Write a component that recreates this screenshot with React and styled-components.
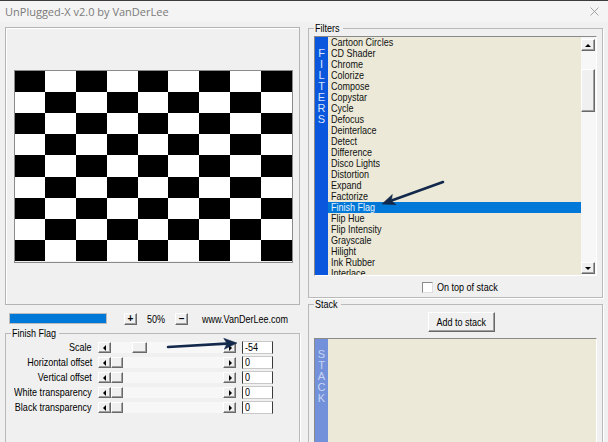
import React from "react";
import styled, { createGlobalStyle } from "styled-components";

const SANS = `"Liberation Sans", Arial, sans-serif`;

const COLORS = {
  face: "#f0f0f0",
  list: "#ece9d8",
  select: "#0078d7",
  band: "#0a57dd",
  bandOff: "#7391da",
  navy: "#13294b",
};

const FILTERS = [
  "Cartoon Circles", "CD Shader", "Chrome", "Colorize", "Compose", "Copystar",
  "Cycle", "Defocus", "Deinterlace", "Detect", "Difference", "Disco Lights",
  "Distortion", "Expand", "Factorize", "Finish Flag", "Flip Hue",
  "Flip Intensity", "Grayscale", "Hilight", "Ink Rubber", "Interlace",
];

const PARAMS = [
  { label: "Scale", value: "-54", thumb: 21, wide: true },
  { label: "Horizontal offset", value: "0", thumb: 0 },
  { label: "Vertical offset", value: "0", thumb: 0 },
  { label: "White transparency", value: "0", thumb: 0 },
  { label: "Black transparency", value: "0", thumb: 0 },
];

const GlobalStyle = createGlobalStyle`
  html, body { margin: 0; padding: 0; background: ${COLORS.face}; }
  body { font-family: ${SANS}; font-size: 11px; color: #000; }
`;

// the dialog uses a condensed bitmap font, so plain Arial is squeezed a bit
const Txt = styled.span`
  display: inline-block;
  white-space: nowrap;
  transform: scaleX(0.82);
  transform-origin: ${(p) => p.$origin || "left"} center;
`;

const Window = styled.div`
  position: relative;
  width: 608px;
  height: 442px;
  overflow: hidden;
  box-sizing: border-box;
  border-top: 1px solid #3c3c3c;
  background: ${COLORS.face};
`;

const TitleBar = styled.div`
  height: 21px;
  display: flex;
  align-items: center;
  justify-content: space-between;
  padding: 0 9px 0 5px;
  background: #f4f4f4;
  font-family: "Open Sans", "Noto Sans", sans-serif;
  font-size: 11px;
  color: #7a7a7a;
`;

const Body = styled.div`
  display: flex;
  gap: 8px;
  padding: 0 5px;
`;

const Column = styled.div`
  width: 295px;
  display: flex;
  flex-direction: column;
`;

const Preview = styled.div`
  margin-top: 5px;
  height: 278px;
  box-sizing: border-box;
  border: 1px solid #b4b4b4;
  box-shadow: inset 1px 1px #fff;
  display: flex;
  align-items: center;
  justify-content: center;
  padding-left: 1px;
`;

const Checker = styled.div`
  width: 279px;
  height: 193px;
  box-sizing: border-box;
  border: 1px solid #8a8a8a;
  display: grid;
  grid-template-columns: repeat(9, 1fr);
  grid-template-rows: repeat(9, 1fr);
`;

const Cell = styled.div`
  background: ${(p) => (p.$dark ? "#000" : "#fff")};
`;

const ZoomBar = styled.div`
  margin-top: 7px;
  height: 13px;
  display: flex;
  align-items: center;
  padding-left: 4px;
  & > * {
    flex: none;
  }
`;

const Progress = styled.div`
  width: 98px;
  height: 11px;
  box-sizing: border-box;
  border: 1px solid #bcbcbc;
  background: ${COLORS.select};
`;

const raised = `
  box-sizing: border-box;
  background: ${COLORS.face};
  border: 1px solid;
  border-color: #fff #696969 #696969 #fff;
  box-shadow: inset -1px -1px #a0a0a0;
`;

const SmallButton = styled.div`
  ${raised}
  width: 13px;
  height: 12px;
  margin-left: ${(p) => p.$ml || 0}px;
  display: flex;
  align-items: center;
  justify-content: center;
  font-size: 10px;
  font-weight: bold;
  line-height: 1;
`;

const Percent = styled.span`
  width: 38px;
  text-align: center;
`;

const Site = styled.span`
  width: 87px;
  margin-left: 14px;
  overflow: visible;
`;

const Group = styled.fieldset`
  margin: ${(p) => p.$mt || 0}px 0 0;
  padding: 0 5px 3px;
  min-width: 0;
  height: ${(p) => p.$h}px;
  box-sizing: border-box;
  border: 1px solid #b9b9b9;
  box-shadow: 1px 1px #fff;
`;

const Legend = styled.legend`
  width: ${(p) => p.$w}px;
  padding: 0 1px;
  line-height: 13px;
  font-size: 11px;
  overflow: visible;
`;

const ParamGrid = styled.div`
  margin-top: 1px;
  display: grid;
  grid-template-columns: 80px 138px 31px;
  column-gap: 6px;
  row-gap: 2px;
  padding-left: 1px;
`;

const ParamLabel = styled.div`
  height: 13px;
  line-height: 13px;
  display: flex;
  justify-content: flex-end;
`;

const HScroll = styled.div`
  display: flex;
  align-items: center;
  height: 13px;
`;

const ArrowButton = styled.div`
  ${raised}
  flex: none;
  width: ${(p) => p.$w}px;
  height: ${(p) => p.$h}px;
  display: flex;
  align-items: center;
  justify-content: center;
  &::after {
    content: "";
    width: 0;
    height: 0;
    border: 3px solid transparent;
    ${(p) =>
      ({
        left: "border-right-color: #000; border-left-width: 0; margin-left: -1px;",
        right: "border-left-color: #000; border-right-width: 0; margin-left: 1px;",
        up: "border-bottom-color: #000; border-top-width: 0;",
        down: "border-top-color: #000; border-bottom-width: 0;",
      })[p.$dir]}
  }
`;

const HTrack = styled.div`
  flex: 1;
  height: 11px;
  display: flex;
  background: #f7f7f7;
`;

const HThumb = styled.div`
  ${raised}
  width: ${(p) => (p.$wide ? 15 : 12)}px;
  height: 11px;
  margin-left: ${(p) => p.$pos}px;
`;

const Edit = styled.div`
  height: 13px;
  box-sizing: border-box;
  background: #fff;
  border: 1px solid;
  border-color: #c8c8c8 #3a3a3a #c8c8c8 #3a3a3a;
  padding-left: 2px;
  line-height: 11px;
`;

const ListBox = styled.div`
  margin-top: ${(p) => p.$mt}px;
  height: ${(p) => p.$h}px;
  display: flex;
  box-sizing: border-box;
  border: 1px solid;
  border-color: #8a8a8a #fff #fff #8a8a8a;
  background: ${COLORS.list};
  overflow: hidden;
`;

const Band = styled.div`
  flex: none;
  width: 13px;
  padding-top: ${(p) => p.$pt}px;
  display: flex;
  flex-direction: column;
  align-items: center;
  background: ${(p) => (p.$off ? COLORS.bandOff : COLORS.band)};
  color: ${(p) => (p.$off ? "#c6d4f2" : "#d9e5ff")};
  font-size: 11px;
  line-height: 11px;
`;

const Items = styled.div`
  flex: 1;
  overflow: hidden;
`;

const Item = styled.div`
  height: 11px;
  line-height: 11px;
  padding-left: 3px;
  white-space: nowrap;
  background: ${(p) => (p.$selected ? COLORS.select : "transparent")};
  color: ${(p) => (p.$selected ? "#e8f2ff" : "#111")};
`;

const VScroll = styled.div`
  flex: none;
  width: 15px;
  padding: 2px 1px 1px 0;
  box-sizing: border-box;
  display: flex;
  flex-direction: column;
  background: #f7f7f7;
`;

const VTrack = styled.div`
  flex: 1;
  padding-top: 18px;
`;

const VThumb = styled.div`
  ${raised}
  height: 43px;
`;

const CheckRow = styled.label`
  margin-top: 4px;
  height: 14px;
  display: flex;
  align-items: center;
  justify-content: center;
  gap: 4px;
  padding-left: 22px;
`;

const CheckBox = styled.span`
  width: 11px;
  height: 11px;
  box-sizing: border-box;
  background: #fff;
  border: 1px solid;
  border-color: #8a8a8a #e0e0e0 #e0e0e0 #8a8a8a;
`;

const ButtonRow = styled.div`
  margin-top: 1px;
  display: flex;
  justify-content: center;
  padding-left: 11px;
`;

const PushButton = styled.div`
  ${raised}
  width: 67px;
  height: 20px;
  display: flex;
  align-items: center;
  justify-content: center;
`;

const Overlay = styled.svg`
  position: absolute;
  top: -1px;
  left: 0;
  pointer-events: none;
`;

function Arrow({ x1, y1, x2, y2 }) {
  const dx = x2 - x1;
  const dy = y2 - y1;
  const len = Math.hypot(dx, dy);
  const ux = dx / len;
  const uy = dy / len;
  const bx = x2 - ux * 13;
  const by = y2 - uy * 13;
  const px = -uy * 5.5;
  const py = ux * 5.5;
  return (
    <g fill={COLORS.navy} stroke={COLORS.navy}>
      <line x1={x1} y1={y1} x2={bx + ux * 2} y2={by + uy * 2} strokeWidth="2.6" strokeLinecap="round" />
      <polygon points={`${x2},${y2} ${bx + px},${by + py} ${bx + ux * 3},${by + uy * 3} ${bx - px},${by - py}`} strokeWidth="0.5" />
    </g>
  );
}

function VerticalWord({ word, off, pt }) {
  return (
    <Band $off={off} $pt={pt}>
      {word.split("").map((c, i) => (
        <span key={i}>{c}</span>
      ))}
    </Band>
  );
}

export default function App() {
  return (
    <>
      <GlobalStyle />
      <Window>
        <TitleBar>
          <span>UnPlugged-X v2.0 by VanDerLee</span>
          <svg width="9" height="9" viewBox="0 0 9 9">
            <path d="M0.5 0.5 L8.5 8.5 M8.5 0.5 L0.5 8.5" stroke="#9a9a9a" strokeWidth="0.9" />
          </svg>
        </TitleBar>
        <Body>
          <Column>
            <Preview>
              <Checker>
                {Array.from({ length: 81 }, (_, i) => (
                  <Cell key={i} $dark={(Math.floor(i / 9) + (i % 9)) % 2 === 0} />
                ))}
              </Checker>
            </Preview>
            <ZoomBar>
              <Progress />
              <SmallButton $ml={17}>+</SmallButton>
              <Percent>
                <Txt $origin="center">50%</Txt>
              </Percent>
              <SmallButton>–</SmallButton>
              <Site>
                <Txt>www.VanDerLee.com</Txt>
              </Site>
            </ZoomBar>
            <Group $mt={2} $h={130}>
              <Legend $w={46}>
                <Txt>Finish Flag</Txt>
              </Legend>
              <ParamGrid>
                {PARAMS.map((p) => (
                  <React.Fragment key={p.label}>
                    <ParamLabel>
                      <Txt $origin="right">{p.label}</Txt>
                    </ParamLabel>
                    <HScroll>
                      <ArrowButton $dir="left" $w={13} $h={11} />
                      <HTrack>
                        <HThumb $pos={p.thumb} $wide={p.wide} />
                      </HTrack>
                      <ArrowButton $dir="right" $w={13} $h={11} />
                    </HScroll>
                    <Edit>
                      <Txt>{p.value}</Txt>
                    </Edit>
                  </React.Fragment>
                ))}
              </ParamGrid>
            </Group>
          </Column>
          <Column>
            <Group $h={276}>
              <Legend $w={27}>
                <Txt>Filters</Txt>
              </Legend>
              <ListBox $mt={1} $h={240}>
                <VerticalWord word="FILTERS" pt={11} />
                <Items>
                  {FILTERS.map((f) => (
                    <Item key={f} $selected={f === "Finish Flag"}>
                      <Txt>{f}</Txt>
                    </Item>
                  ))}
                </Items>
                <VScroll>
                  <ArrowButton $dir="up" $w={14} $h={12} />
                  <VTrack>
                    <VThumb />
                  </VTrack>
                  <ArrowButton $dir="down" $w={14} $h={12} />
                </VScroll>
              </ListBox>
              <CheckRow>
                <CheckBox />
                <Txt>On top of stack</Txt>
              </CheckRow>
            </Group>
            <Group $h={160}>
              <Legend $w={25}>
                <Txt>Stack</Txt>
              </Legend>
              <ButtonRow>
                <PushButton>
                  <Txt $origin="center">Add to stack</Txt>
                </PushButton>
              </ButtonRow>
              <ListBox $mt={6} $h={120}>
                <VerticalWord word="STACK" off pt={10} />
                <Items />
              </ListBox>
            </Group>
          </Column>
        </Body>
        <Overlay width="608" height="442">
          <Arrow x1={443} y1={182} x2={382} y2={204} />
          <Arrow x1={168} y1={347} x2={237} y2={343} />
        </Overlay>
      </Window>
    </>
  );
}
